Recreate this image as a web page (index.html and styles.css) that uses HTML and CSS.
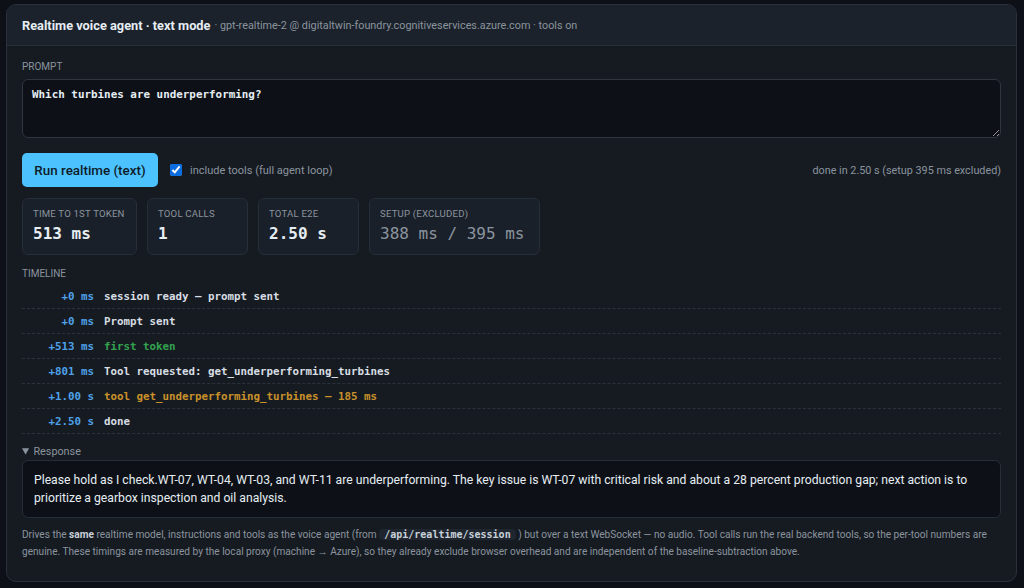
FILE: index.html
```html
<!DOCTYPE html>
<html>
<head>
    <meta charset="UTF-8">
    <title>Realtime voice agent</title>
    <link rel="stylesheet" href="styles.css">
</head>
<body>
    <div class="panel">
        <div class="panel-head">
            <span class="panel-title">Realtime voice agent · text mode</span>
            <span class="panel-sub">· gpt-realtime-2 @ digitaltwin-foundry.cognitiveservices.azure.com · tools on</span>
        </div>
        <div class="panel-body">
            <div class="label">Prompt</div>
            <textarea class="prompt" id="promptInput">Which turbines are underperforming?</textarea>

            <div class="run-row">
                <button class="run-button" id="runButton">Run realtime (text)</button>
                <label class="tools-check"><input type="checkbox" checked> include tools (full agent loop)</label>
                <span class="run-status">done in 2.50 s (setup 395 ms excluded)</span>
            </div>

            <div class="stats">
                <div class="stat">
                    <div class="stat-label">Time to 1st token</div>
                    <div class="stat-value">513 ms</div>
                </div>
                <div class="stat">
                    <div class="stat-label">Tool calls</div>
                    <div class="stat-value">1</div>
                </div>
                <div class="stat">
                    <div class="stat-label">Total E2E</div>
                    <div class="stat-value">2.50 s</div>
                </div>
                <div class="stat">
                    <div class="stat-label">Setup (excluded)</div>
                    <div class="stat-value muted">388 ms / 395 ms</div>
                </div>
            </div>

            <div class="label timeline-label">Timeline</div>
            <div class="timeline">
                <div class="tl-row"><span class="tl-time">+0 ms</span><span class="tl-event">session ready — prompt sent</span></div>
                <div class="tl-row"><span class="tl-time">+0 ms</span><span class="tl-event">Prompt sent</span></div>
                <div class="tl-row"><span class="tl-time">+513 ms</span><span class="tl-event token">first token</span></div>
                <div class="tl-row"><span class="tl-time">+801 ms</span><span class="tl-event">Tool requested: get_underperforming_turbines</span></div>
                <div class="tl-row"><span class="tl-time">+1.00 s</span><span class="tl-event tool">tool get_underperforming_turbines — 185 ms</span></div>
                <div class="tl-row"><span class="tl-time">+2.50 s</span><span class="tl-event">done</span></div>
            </div>

            <details class="response" open>
                <summary>Response</summary>
                <div class="response-text">Please hold as I check.WT-07, WT-04, WT-03, and WT-11 are underperforming. The key issue is WT-07 with critical risk and about a 28 percent production gap; next action is to prioritize a gearbox inspection and oil analysis.</div>
            </details>

            <p class="note">Drives the <b>same</b> realtime model, instructions and tools as the voice agent (from <code>/api/realtime/session</code> ) but over a text WebSocket — no audio. Tool calls run the real backend tools, so the per-tool numbers are genuine. These timings are measured by the local proxy (machine → Azure), so they already exclude browser overhead and are independent of the baseline-subtraction above.</p>
        </div>
    </div>
</body>
</html>
```
FILE: styles.css
```css
body {
    margin: 0;
    padding: 4px 7px 7px 6px;
    background-color: #0d1117;
    font-family: Roboto, "Noto Sans", sans-serif;
    color: #e6edf3;
}
.panel {
    background-color: #161b22;
    border: 1px solid #2a313b;
    border-radius: 10px;
    overflow: hidden;
}
.panel-head {
    height: 40px;
    display: flex;
    align-items: center;
    gap: 4px;
    padding: 0 15px;
    background-color: #1b222b;
    border-bottom: 1px solid #262e38;
}
.panel-title {
    font-size: 12.8px;
    font-weight: bold;
    color: #e6edf3;
}
.panel-sub {
    font-size: 10.8px;
    color: #8b949e;
}
.panel-body {
    padding: 14px 15px 21px 15px;
}
.label {
    font-size: 10px;
    text-transform: uppercase;
    color: #8b949e;
    line-height: 13px;
    margin-bottom: 6px;
}
.prompt {
    display: block;
    box-sizing: border-box;
    width: 100%;
    height: 59px;
    margin: 0;
    padding: 8px 9px;
    background-color: #0d1117;
    color: #e6edf3;
    border: 1px solid #2e3640;
    border-radius: 6px;
    font-family: "DejaVu Sans Mono", monospace;
    font-size: 10.9px;
    font-weight: bold;
    resize: vertical;
}
.run-row {
    display: flex;
    align-items: center;
    margin-top: 15px;
}
.run-button {
    height: 34px;
    width: 136px;
    padding: 0;
    background-color: #4cc2ff;
    color: #0d1b2a;
    border: none;
    border-radius: 5px;
    font-family: Roboto, sans-serif;
    font-size: 13.4px;
    font-weight: 500;
    cursor: pointer;
}
.tools-check {
    display: flex;
    align-items: center;
    gap: 8px;
    margin-left: 12px;
    font-size: 11px;
    color: #8b949e;
}
.tools-check input {
    width: 12px;
    height: 12px;
    margin: 0;
    accent-color: #0b6ee0;
}
.run-status {
    margin-left: auto;
    font-size: 10.8px;
    color: #8b949e;
}
.stats {
    display: flex;
    gap: 10px;
    margin-top: 11px;
}
.stat {
    box-sizing: border-box;
    height: 57px;
    padding: 9px 10px 0 10px;
    background-color: #1a2029;
    border: 1px solid #262e38;
    border-radius: 6px;
}
.stat:nth-child(1) { width: 115px; }
.stat:nth-child(2) { width: 101px; }
.stat:nth-child(3) { width: 101px; }
.stat:nth-child(4) { width: 171px; }
.stat-label {
    font-size: 9.6px;
    text-transform: uppercase;
    color: #8b949e;
    letter-spacing: 0.2px;
}
.stat-value {
    margin-top: 5px;
    font-family: "DejaVu Sans Mono", monospace;
    font-size: 16px;
    font-weight: bold;
    color: #e6edf3;
}
.stat-value.muted {
    font-weight: normal;
    color: #8b949e;
}
.timeline-label {
    margin-top: 12px;
    margin-bottom: 4px;
}
.tl-row {
    display: flex;
    align-items: center;
    height: 24px;
    border-bottom: 1px dashed #2a323c;
    font-family: "DejaVu Sans Mono", monospace;
    font-size: 10.8px;
    font-weight: bold;
}
.tl-time {
    width: 72px;
    text-align: right;
    color: #4ea1e8;
}
.tl-event {
    margin-left: 10px;
    color: #d8dee4;
}
.tl-event.token {
    color: #34a24f;
}
.tl-event.tool {
    color: #c9912a;
}
.response {
    margin-top: 10px;
}
.response summary {
    font-size: 10.8px;
    color: #8b949e;
    line-height: 15px;
    cursor: pointer;
}
.response-text {
    margin-top: 1px;
    padding: 10px 11px;
    background-color: #0d1117;
    border: 1px solid #262e38;
    border-radius: 6px;
    font-size: 12.2px;
    line-height: 18px;
    color: #e6edf3;
}
.note {
    margin: 8px 0 0 0;
    font-size: 10.1px;
    line-height: 17px;
    color: #8b949e;
}
.note b {
    color: #c9d1d9;
}
.note code {
    font-family: "DejaVu Sans Mono", monospace;
    font-size: 10px;
    font-weight: bold;
    padding: 0 5px;
    background-color: #1f2630;
    border-radius: 4px;
    color: #c9d1d9;
}
```
